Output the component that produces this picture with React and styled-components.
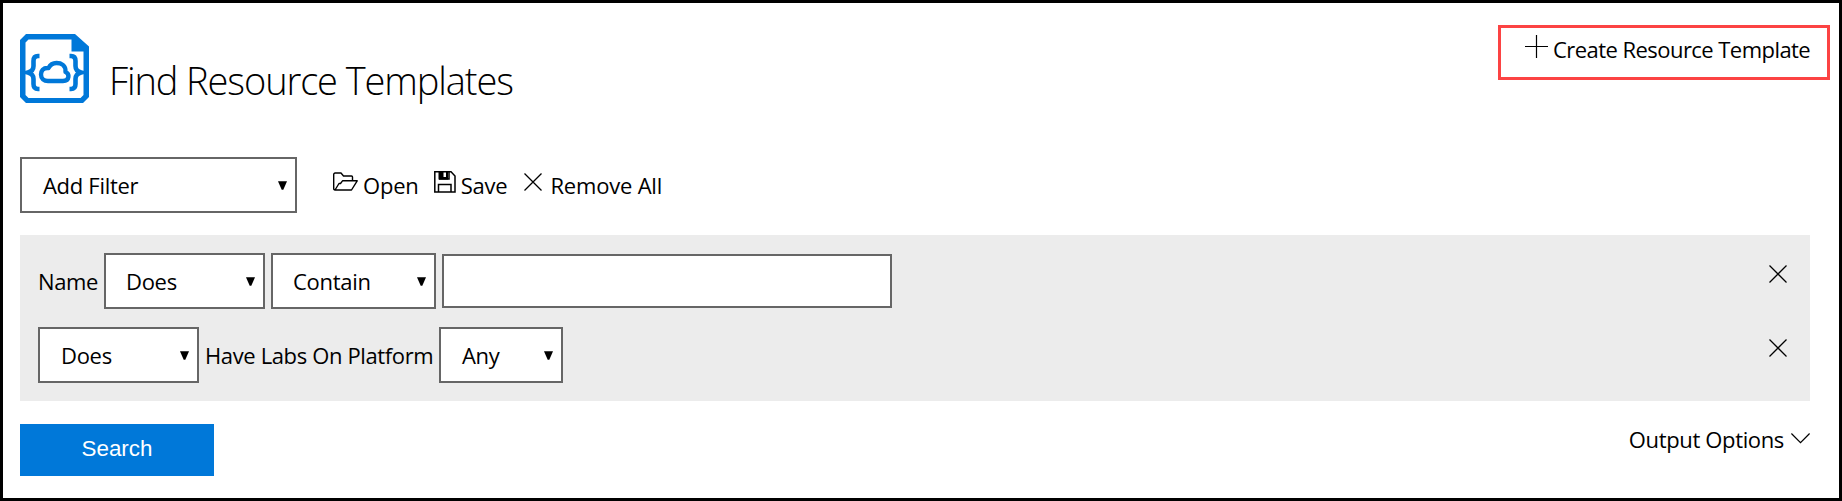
import React from "react";
import styled, { createGlobalStyle } from "styled-components";

const GlobalStyle = createGlobalStyle`
  *, *::before, *::after { box-sizing: border-box; }
  body {
    margin: 0;
    background: #fff;
    color: #000;
    font-family: "Open Sans", "Noto Sans", sans-serif;
    font-size: 22px;
    font-weight: 400;
    line-height: 30px;
  }
  svg { display: block; flex: none; }
`;

const Page = styled.div`
  height: 501px;
  border: 3px solid #000;
  padding: 22px 29px 0 17px;
  display: flex;
  flex-direction: column;
`;

const Header = styled.header`
  display: flex;
  justify-content: space-between;
  align-items: flex-start;
  height: 132px;
`;

const Heading = styled.div`
  display: flex;
  align-items: flex-start;
  gap: 20px;
  padding-top: 9px;
`;

const Title = styled.h1`
  margin: 20px 0 0;
  font-size: 38px;
  line-height: 52px;
  font-weight: 300;
  letter-spacing: -1.1px;
  white-space: nowrap;
`;

const CreateLink = styled.a`
  display: flex;
  align-items: flex-start;
  gap: 5px;
  width: 332px;
  height: 55px;
  margin-right: -20px;
  padding: 7px 0 0 24px;
  border: 3px solid #fc4343;
  letter-spacing: -0.55px;
  white-space: nowrap;

  span { margin-top: -1px; }
`;

const Toolbar = styled.div`
  display: flex;
  height: 56px;
`;

const Actions = styled.div`
  display: flex;
  padding-left: 36px;
`;

const Action = styled.a`
  display: flex;
  align-items: flex-start;
  padding-top: 13px;
  margin-right: ${(p) => p.$after}px;
  letter-spacing: -0.2px;
  white-space: nowrap;

  span { padding: 0 0 0 ${(p) => p.$gap}px; }
`;

const IconSlot = styled.i`
  margin-top: ${(p) => p.$top}px;
`;

const SelectBox = styled.div`
  display: flex;
  align-items: center;
  justify-content: space-between;
  width: ${(p) => p.$width}px;
  height: 56px;
  padding: 0 8px 0 ${(p) => p.$inset || 20}px;
  border: 2px solid #666;
  background: #fff;
  letter-spacing: -0.3px;

  span { padding-bottom: 1px; }
`;

const Panel = styled.section`
  display: flex;
  flex-direction: column;
  gap: 18px;
  height: 166px;
  margin-top: 22px;
  padding: 18px 23px 18px 18px;
  background: #ececec;
`;

const FilterRow = styled.div`
  display: flex;
  align-items: center;
  gap: 6px;
  height: 56px;
`;

const Label = styled.label`
  width: ${(p) => p.$width}px;
  padding-bottom: 1px;
  letter-spacing: -0.37px;
  white-space: nowrap;
`;

const TextInput = styled.input`
  width: 450px;
  height: 54px;
  border: 2px solid #666;
  border-radius: 0;
  background: #fff;
  outline: none;
`;

const RemoveButton = styled.a`
  align-self: flex-start;
  margin-left: auto;
  padding-top: 11.5px;
`;

const Footer = styled.footer`
  display: flex;
  justify-content: space-between;
  align-items: flex-start;
  margin-top: 23px;
`;

const SearchButton = styled.button`
  width: 194px;
  height: 52px;
  padding: 0 0 2px;
  border: 0;
  background: #0078d9;
  color: #fff;
  font: 22.4px "Liberation Sans", Arial, sans-serif;
`;

const OutputOptions = styled.a`
  display: flex;
  gap: 7px;
  letter-spacing: -0.35px;

  svg { margin-top: 9px; }
`;

const TemplateIcon = () => (
  <svg width="69" height="69" viewBox="0 0 69 69" fill="none" stroke="#0078d9">
    <path fill="#0078d9" stroke="none" fillRule="evenodd" d="M6 0H55L69 12.500V63L63 69H6L0 63V6ZM8.500 5.500L5.500 8.500V61L8.500 64H60.500L63.500 61V17.500H51.500V5.500Z" />
    <path strokeWidth="4.600" d="M19.500 22H18Q13.500 22 13.500 27V32Q13.500 37 8 38.500Q13.500 40 13.500 45V50Q13.500 55 18 55H19.500" />
    <path strokeWidth="4.600" d="M49.500 22H51Q55.500 22 55.500 27V32Q55.500 37 61 38.500Q55.500 40 55.500 45V50Q55.500 55 51 55H49.500" />
    <path strokeWidth="4.400" strokeLinejoin="round" d="M28 47H43C50 47 49.500 39.500 45.500 38C46 31 41 29 36.500 29C32 29 30 31 28.500 34C23 33.500 21 37 21 40.500C21 44.500 24 47 28 47Z" />
  </svg>
);

const PlusIcon = () => (
  <svg width="23" height="23" viewBox="0 0 23 23" stroke="#000" strokeWidth="1.200">
    <path d="M0 11.500H23M11.500 0V23" />
  </svg>
);

const CrossIcon = () => (
  <svg width="18" height="18" viewBox="0 0 18 18" stroke="#000" strokeWidth="1.250">
    <path d="M.500 .500L17.500 17.500M17.500 .500L.500 17.500" />
  </svg>
);

const ChevronIcon = () => (
  <svg width="19" height="11" viewBox="0 0 19 11" fill="none" stroke="#000" strokeWidth="1.200">
    <path d="M.400 .500L9.500 9.600L18.600 .500" />
  </svg>
);

const FolderIcon = () => (
  <svg width="25" height="19" viewBox="0 0 25 19" fill="none" stroke="#000" strokeWidth="1.400" strokeLinejoin="round">
    <path d="M2 18Q.700 18 .700 16.500V2.500Q.700 1 2.200 1H8L10.500 4H18.500Q19.500 4 19.500 5V8.500M2 18H18.500L24.200 8.800H9.500L7.500 11.500H6L2 18" />
  </svg>
);

const SaveIcon = () => (
  <svg width="22" height="22" viewBox="0 0 22 22" fill="none" stroke="#000" strokeWidth="1.500">
    <path d="M.800 .800H17L21 5V21H.800ZM4.500 21V13.500H17V21M15 1V8H5" />
    <path fill="#000" stroke="none" d="M4.500 .800H9.500V6H12V.800H14V8.500H4.500Z" />
  </svg>
);

const Arrow = () => (
  <svg width="9" height="9" viewBox="0 0 9 9">
    <path d="M0 .300H9L5.300 8.800H3.700Z" />
  </svg>
);

const Select = ({ width, inset, children }) => (
  <SelectBox $width={width} $inset={inset}>
    <span>{children}</span>
    <Arrow />
  </SelectBox>
);

export default function App() {
  return (
    <>
      <GlobalStyle />
      <Page>
        <Header>
          <Heading>
            <TemplateIcon />
            <Title>Find Resource Templates</Title>
          </Heading>
          <CreateLink>
            <PlusIcon />
            <span>Create Resource Template</span>
          </CreateLink>
        </Header>

        <Toolbar>
          <Select width={277} inset={21}>Add Filter</Select>
          <Actions>
            <Action $gap={5} $after={15}>
              <IconSlot $top={2}><FolderIcon /></IconSlot>
              <span>Open</span>
            </Action>
            <Action $gap={5} $after={17}>
              <IconSlot $top={1}><SaveIcon /></IconSlot>
              <span>Save</span>
            </Action>
            <Action $gap={8} $after={0}>
              <IconSlot $top={3}><CrossIcon /></IconSlot>
              <span>Remove All</span>
            </Action>
          </Actions>
        </Toolbar>

        <Panel>
          <FilterRow>
            <Label $width={60}>Name</Label>
            <Select width={161}>Does</Select>
            <Select width={165}>Contain</Select>
            <TextInput aria-label="Name" />
            <RemoveButton><CrossIcon /></RemoveButton>
          </FilterRow>
          <FilterRow>
            <Select width={161} inset={21}>Does</Select>
            <Label $width={228}>Have Labs On Platform</Label>
            <Select width={124} inset={21}>Any</Select>
            <RemoveButton><CrossIcon /></RemoveButton>
          </FilterRow>
        </Panel>

        <Footer>
          <SearchButton>Search</SearchButton>
          <OutputOptions>
            <span>Output Options</span>
            <ChevronIcon />
          </OutputOptions>
        </Footer>
      </Page>
    </>
  );
}
